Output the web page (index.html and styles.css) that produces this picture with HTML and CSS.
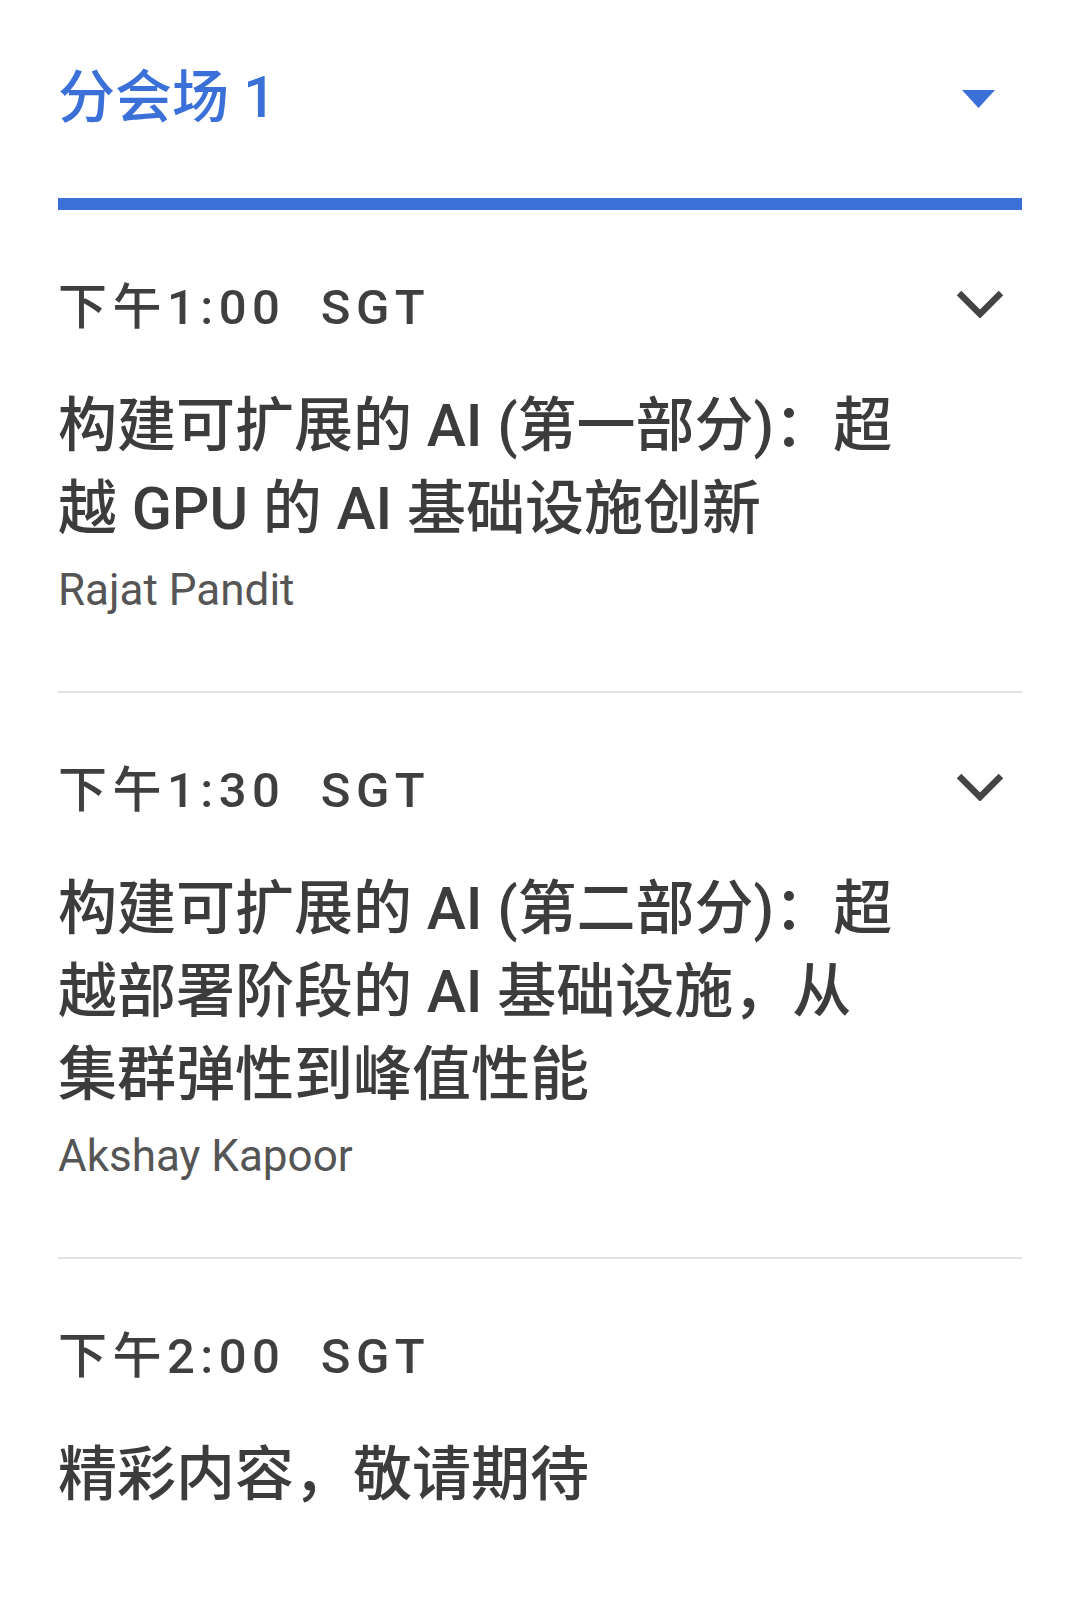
FILE: index.html
```html
<!DOCTYPE html>
<html lang="zh-CN">
<head>
    <meta charset="UTF-8">
    <meta name="viewport" content="width=device-width, initial-scale=1.0">
    <title>分会场 1</title>
    <link rel="stylesheet" href="styles.css">
</head>
<body>
<div class="page">
    <!-- 分会场选择 -->
    <div class="track-head">
        <h1>分会场 1</h1>
        <svg class="caret" width="33" height="18" viewBox="0 0 33 18">
            <polygon points="0,0 33,0 16.5,18" fill="#3a70d8"/>
        </svg>
    </div>
    <div class="track-bar"></div>

    <!-- 议程 -->
    <div class="agenda">
        <div class="item">
            <div class="time-row">
                <span class="time">下午1:00&nbsp; SGT</span>
                <svg class="chevron" width="46" height="28" viewBox="0 0 46 28">
                    <polyline points="2,3 23,24 44,3" fill="none" stroke="#444" stroke-width="6.5"/>
                </svg>
            </div>
            <div class="talk">构建可扩展的 AI (第一部分)：超越 GPU 的 AI 基础设施创新</div>
            <div class="speaker">Rajat Pandit</div>
        </div>

        <div class="item">
            <div class="time-row">
                <span class="time">下午1:30&nbsp; SGT</span>
                <svg class="chevron" width="46" height="28" viewBox="0 0 46 28">
                    <polyline points="2,3 23,24 44,3" fill="none" stroke="#444" stroke-width="6.5"/>
                </svg>
            </div>
            <div class="talk">构建可扩展的 AI (第二部分)：超越部署阶段的 AI 基础设施，从集群弹性到峰值性能</div>
            <div class="speaker">Akshay Kapoor</div>
        </div>

        <div class="item last">
            <div class="time-row">
                <span class="time">下午2:00&nbsp; SGT</span>
            </div>
            <div class="talk">精彩内容，敬请期待</div>
        </div>
    </div>
</div>
</body>
</html>
```

FILE: styles.css
```css
body {
    margin: 0;
    padding: 0;
    background-color: #fff;
    font-family: Roboto, "Noto Sans CJK SC", sans-serif;
}

.page {
    padding: 0 58px;
}

/* Tiêu đề phân hội trường */
.track-head {
    display: flex;
    justify-content: space-between;
    align-items: center;
    padding-top: 58px;
    height: 80px;
}

.track-head h1 {
    margin: 0;
    font-size: 57px;
    font-weight: 500;
    line-height: 80px;
    color: #3a70d8;
}

.track-head .caret {
    margin-right: 27px;
    margin-top: 2px;
}

.track-bar {
    margin-top: 60px;
    height: 12px;
    background-color: #3a70d8;
}

/* Danh sách phiên */
.item {
    padding: 68px 0 71px;
    border-bottom: 2px solid #e2e2e2;
}

.item.last {
    border-bottom: none;
}

.time-row {
    display: flex;
    justify-content: space-between;
    align-items: center;
    height: 60px;
}

.time {
    font-size: 49px;
    font-weight: 500;
    line-height: 60px;
    letter-spacing: 5.5px;
    color: #3f3f3f;
}

.chevron {
    margin-right: 19px;
    margin-top: -8px;
}

.talk {
    width: 840px;
    margin-top: 46px;
    font-size: 59px;
    font-weight: 500;
    line-height: 83px;
    color: #3c3c3c;
}

.speaker {
    margin-top: 10px;
    font-size: 44px;
    line-height: 60px;
    color: #555;
}
```
